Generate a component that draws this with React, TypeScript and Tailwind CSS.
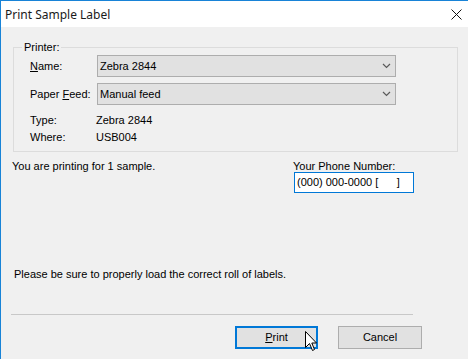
import React from 'react';

const Chevron: React.FC = () => (
  <svg width="9" height="6" viewBox="0 0 9 6" className="shrink-0">
    <polyline points="1,1 4.5,4.5 8,1" fill="none" stroke="#5a5a5a" strokeWidth="1.2" />
  </svg>
);

const Select: React.FC<{ value: string }> = ({ value }) => (
  <div className="flex items-center justify-between w-[299px] h-[22px] bg-[#e1e1e1] border border-[#adadad] pl-[2px] pr-[4px]">
    <span>{value}</span>
    <Chevron />
  </div>
);

export default function App() {
  return (
    <div
      className="w-[468px] h-[359px] bg-[#f0f0f0] border-l border-t border-[#1883d7] text-[11px] leading-[13px] text-black overflow-hidden relative"
      style={{ fontFamily: '"Liberation Sans", Arial, sans-serif' }}
    >
      {/* Title bar */}
      <div className="h-[26px] bg-white flex items-center justify-between pl-[4px] pr-[6px]">
        <span className="text-[12px] text-[#1a1a1a]" style={{ fontFamily: '"Noto Sans", "Open Sans", sans-serif' }}>
          Print Sample Label
        </span>
        <svg width="11" height="11" viewBox="0 0 11 11">
          <path d="M0.5 0.5 L10.5 10.5 M10.5 0.5 L0.5 10.5" stroke="#111" strokeWidth="1" />
        </svg>
      </div>

      {/* Printer group */}
      <div className="relative ml-[12px] mt-[20px] w-[445px] h-[105px] border border-[#dcdcdc] pt-[7px] pl-[16px]">
        <span className="absolute left-[8px] top-[-7px] bg-[#f0f0f0] px-[2px]">Printer:</span>
        <div className="flex items-center h-[22px]">
          <span className="w-[67px]"><u>N</u>ame:</span>
          <Select value="Zebra 2844" />
        </div>
        <div className="flex items-center h-[22px] mt-[6px]">
          <span className="w-[67px]">Paper <u>F</u>eed:</span>
          <Select value="Manual feed" />
        </div>
        <div className="flex items-center h-[17px] mt-[7px]">
          <span className="w-[66px]">Type:</span>
          <span>Zebra 2844</span>
        </div>
        <div className="flex items-center h-[17px]">
          <span className="w-[66px]">Where:</span>
          <span>USB004</span>
        </div>
      </div>

      {/* Sample info + phone */}
      <div className="flex mt-[8px] pl-[11px]">
        <span className="w-[281px]">You are printing for 1 sample.</span>
        <div className="flex flex-col">
          <span>Your Phone Number:</span>
          <div className="mt-[-1px] ml-[1px] w-[120px] h-[21px] border border-[#0078d7] bg-white flex items-center pl-[2px]">
            (000) 000-0000 [&nbsp;&nbsp;&nbsp;&nbsp;&nbsp;&nbsp;]
          </div>
        </div>
      </div>

      <div className="pl-[13px] mt-[75px]">Please be sure to properly load the correct roll of labels.</div>

      {/* Separator */}
      <div className="ml-[10px] mt-[33px] w-[402px] h-[2px] border-t border-[#c8c8c8] border-b-white" />

      {/* Buttons */}
      <div className="flex mt-[10px] pl-[234px] gap-[20px]">
        <div className="w-[83px] h-[23px] bg-[#e1e1e1] border-2 border-[#0078d7] flex items-center justify-center">
          <span><u>P</u>rint</span>
        </div>
        <div className="w-[84px] h-[23px] bg-[#e1e1e1] border border-[#adadad] flex items-center justify-center">
          Cancel
        </div>
      </div>

      {/* Mouse cursor */}
      <svg className="absolute left-[304px] top-[330px]" width="13" height="21" viewBox="0 0 13 21">
        <path d="M0.5 0.5 L0.5 16.5 L4.5 12.5 L7.5 19.5 L9.5 18.5 L6.8 12 L11.5 12 Z" fill="#fff" stroke="#000" strokeWidth="1" />
      </svg>
    </div>
  );
}
